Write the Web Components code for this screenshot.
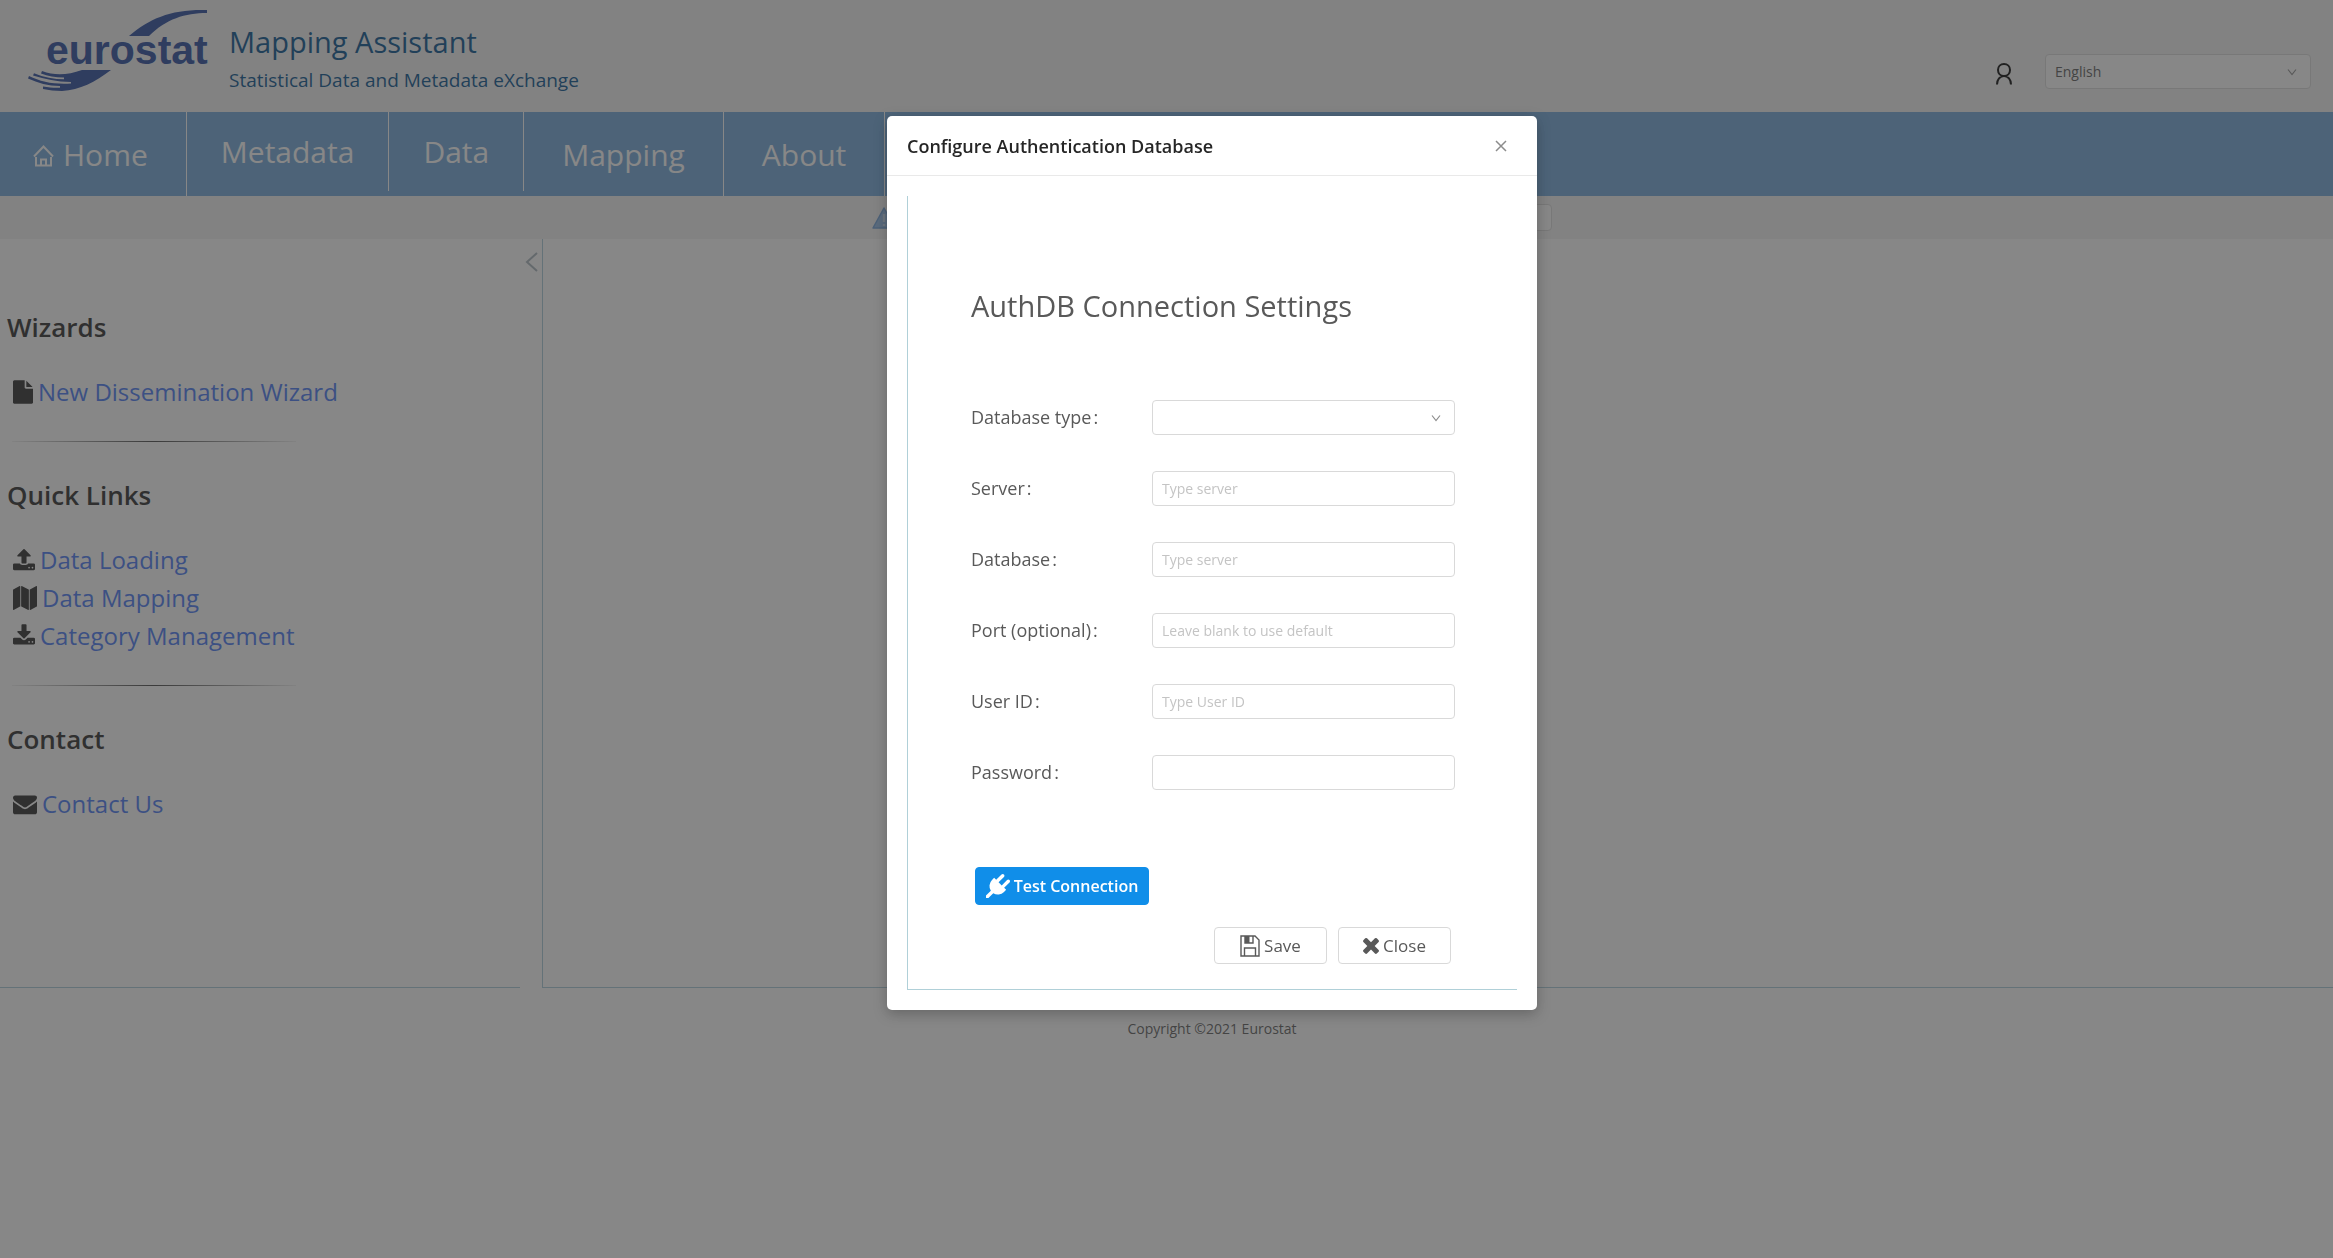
<!DOCTYPE html>
<html lang="en">
<head>
<meta charset="utf-8">
<title>Mapping Assistant</title>
<style>
  html, body { margin: 0; min-height: 100%; }
  body {
    background: #fff;
    color: #595959;
    font-family: "Open Sans", "Noto Sans", sans-serif;
    --bar: #f3f3f3;
    --line: #a9cbd9;
    --shift: 91px;
    overflow: hidden;
  }
</style>
</head>
<body>
<mapping-app></mapping-app>

<script>
const ICONS = {
  file: ['128 0 1536 1792', 20, 24, 'M1152 512V40q22 14 36 28l408 408q14 14 28 36h-472zm-128 32q0 40 28 68t68 28h544v1056q0 40-28 68t-68 28H224q-40 0-68-28t-28-68V96q0-40 28-68T224 0h800v544z'],
  upload: ['64 0 1664 1792', 22, 24, 'M1344 1472q0-26-19-45t-45-19-45 19-19 45 19 45 45 19 45-19 19-45zm256 0q0-26-19-45t-45-19-45 19-19 45 19 45 45 19 45-19 19-45zm128-224v320q0 40-28 68t-68 28H160q-40 0-68-28t-28-68v-320q0-40 28-68t68-28h427q21 56 70.5 92t110.5 36h256q61 0 110.5-36t70.5-92h427q40 0 68 28t28 68zm-325-648q-17 40-59 40h-256v448q0 26-19 45t-45 19H768q-26 0-45-19t-19-45V640H448q-42 0-59-40-17-39 14-69l448-448q18-19 45-19t45 19l448 448q31 30 14 69z'],
  download: ['64 0 1664 1792', 22, 24, 'M1344 1344q0-26-19-45t-45-19-45 19-19 45 19 45 45 19 45-19 19-45zm256 0q0-26-19-45t-45-19-45 19-19 45 19 45 45 19 45-19 19-45zm128-224v320q0 40-28 68t-68 28H160q-40 0-68-28t-28-68v-320q0-40 28-68t68-28h465l135 136q58 56 136 56t136-56l136-136h464q40 0 68 28t28 68zm-325-569q17 41-14 70l-448 448q-18 19-45 19t-45-19L403 621q-31-29-14-70 17-39 59-39h256V64q0-26 19-45t45-19h256q26 0 45 19t19 45v448h256q42 0 59 39z'],
  map: ['0 0 1792 1792', 24, 24, 'M512 0q13 0 22.5 9.5t9.5 22.5v1472q0 20-17 28l-480 256q-7 4-15 4-13 0-22.5-9.5t-9.5-22.5v-1472q0-20 17-28l480-256q7-4 15-4zm1248 0q13 0 22.5 9.5t9.5 22.5v1472q0 20-17 28l-480 256q-7 4-15 4-13 0-22.5-9.5t-9.5-22.5v-1472q0-20 17-28l480-256q7-4 15-4zm-1120 0q8 0 14 3l512 256q18 10 18 29v1472q0 13-9.5 22.5t-22.5 9.5q-8 0-14-3l-512-256q-18-10-18-29v-1472q0-13 9.5-22.5t22.5-9.5z'],
  envelope: ['0 0 1792 1792', 24, 24, 'M1792 710v794q0 66-47 113t-113 47H160q-66 0-113-47T0 1504V710q44 49 101 87 362 246 497 345 57 42 92.5 65.5t94.5 48 110 24.5h2q51 0 110-24.5t94.5-48 92.5-65.5q170-123 498-345 57-39 100-87zm0-294q0 79-49 151t-122 123q-376 261-468 325-10 7-42.5 31t-54 38.5-52 32.5-57.5 27-50 9h-2q-23 0-50-9t-57.5-27-52-32.5-54-38.5-42.5-31q-91-64-262-182.5T172 690q-62-42-117-115.5T0 438q0-78 41.5-130T160 256h1472q65 0 112.5 47t47.5 113z'],
  plug: ['0 0 1792 1792', 24, 24, 'M1755 453q37 38 37 90.5t-37 90.5l-401 400 150 150-160 160q-163 163-389.5 186.5t-411.5-100.5l-362 362h-181v-181l362-362q-124-185-100.5-411.5t186.5-389.5l160-160 150 150 400-401q38-37 91-37t90 37 37 90.5-37 90.5l-400 401 234 234 401-400q38-37 91-37t90 37z'],
  times: ['302 302 1188 1252', 16, 17, 'M1490 1322q0 40-28 68l-136 136q-28 28-68 28t-68-28l-294-294-294 294q-28 28-68 28t-68-28l-136-136q-28-28-28-68t28-68l294-294-294-294q-28-28-28-68t28-68l136-136q28-28 68-28t68 28l294 294 294-294q28-28 68-28t68 28l136 136q28 28 28 68t-28 68l-294 294 294 294q28 28 28 68z'],
};
const STROKED = {
  home: ['0 -4 21 26', 21, 26, 2, 'M1 11.5 10.5 1.5 20 11.5M3 12v8.5h15V12M8 20.500v-6h5v6'],
  user: ['0 0 16 22', 16, 22, 2, 'M1 21.500c0-5 3-8.500 7-8.500s7 3.500 7 8.500M8 13c-3.500 0-6-2.500-6-6s2.500-6 6-6 6 2.500 6 6-2.500 6-6 6z'],
  left: ['0 0 13 20', 13, 20, 2, 'M12 1 2 10l10 9'],
  down: ['0 0 10 8', 10, 8, 1.2, 'M1 1.500 5 6.500 9 1.500'],
  cross: ['0 0 12 12', 12, 12, 1.5, 'M1 1 11 11M11 1 1 11'],
  floppy: ['0 0 20 22', 20, 22, 1.4, 'M1 1h14l4 4v16H1zM4.500 21v-8h11v8M5 1v7h8V1'],
};

function define(name, html) {
  customElements.define(name, class extends HTMLElement {
    connectedCallback() {
      if (this.shadowRoot) return;
      const root = this.attachShadow({ mode: 'open' });
      root.innerHTML = typeof html === 'function' ? html(this) : html;
    }
  });
}

define('ui-icon', el => {
  const n = el.getAttribute('name');
  const css = '<style>:host{display:block;flex:none}svg{display:block}</style>';
  if (ICONS[n]) {
    const [box, w, h, d] = ICONS[n];
    return `${css}<svg aria-hidden="true" viewBox="${box}" width="${w}" height="${h}" fill="currentColor"><path d="${d}"/></svg>`;
  }
  const [box, w, h, s, d] = STROKED[n];
  const shutter = n === 'floppy' ? '<path fill="currentColor" stroke="none" d="M5 1h4.500v7H5z"/>' : '';
  return `${css}<svg aria-hidden="true" viewBox="${box}" width="${w}" height="${h}" fill="none" stroke="currentColor" stroke-width="${s}"><path d="${d}"/>${shutter}</svg>`;
});

define('eurostat-logo', `
<style>:host{display:block;flex:none}svg{display:block}text{font:bold 41px "Liberation Sans",sans-serif}</style>
<svg viewBox="28 8 180 84" width="180" height="84" fill="#23469c" role="img" aria-label="eurostat">
  <path d="M129 36C150 18 172 9 207 10v3C185 13 166 19 149 36z"/>
  <text x="46" y="64">eurostat</text>
  <path d="M111 70C95 82 80 90 62 91 55 91 49 90 43 89v-2.500c6 1 12 1.500 17 1.200V86c-12 0-22-3-32-7.500l1-2.500c12 6 25 8.500 42 7.500V82C57 82 45 79 33 75.500l1-2.300c10 4 20 6 30 6v-1.700C55 77.500 48 76 41 73.500l1-2.500C55 76 68 75 82 70z"/>
</svg>`);

define('ui-select', el => `
<style>
  :host{display:grid}
  select,ui-icon{grid-area:1/1}
  select{appearance:none;box-sizing:border-box;width:100%;height:35px;margin:0;padding:0 28px 0 9px;border:1px solid #d9d9d9;border-radius:4px;background:#fff;color:#595959;font:14px "Open Sans",sans-serif}
  ui-icon{justify-self:end;align-self:center;margin-right:14px;color:#8c8c8c;pointer-events:none}
</style>
<select aria-label="${el.getAttribute('label')}"><option>${el.getAttribute('value') || ''}</option></select>
<ui-icon name="down"></ui-icon>`);

define('app-header', `
<style>
  :host{display:flex;align-items:flex-start;height:112px;background:var(--bar)}
  eurostat-logo{margin:8px 21px 0 28px}
  .brand{display:flex;flex-direction:column;gap:4px;padding-top:23px;color:#004f8c}
  h1,p{margin:0;font-weight:400}
  h1{font-size:29px;line-height:38px}
  p{font-size:19px;line-height:30px}
  .tools{display:flex;align-items:flex-start;gap:33px;margin-left:auto;padding:54px 22px 0 0}
  button{margin:9px 0 0;padding:0;border:0;background:none;color:#000}
  ui-select{width:266px}
</style>
<eurostat-logo></eurostat-logo>
<div class="brand"><h1>Mapping Assistant</h1><p>Statistical Data and Metadata eXchange</p></div>
<div class="tools">
  <button aria-label="Account"><ui-icon name="user"></ui-icon></button>
  <ui-select label="Language" value="English"></ui-select>
</div>`);

define('nav-item', `
<style>
  :host{display:block;border-right:1px solid #fff}
  a{display:flex;align-items:center;gap:9px;height:84px;padding:0 38px;color:#fff;font-size:30px;text-decoration:none}
  :host([short]) a{height:79px;padding:0 34px}
  :host([icon]) a{padding-left:33px}
</style>
<a href="#"><slot name="icon"></slot><slot></slot></a>`);

define('app-nav', `
<style>
  :host{display:block;background:#6ea6da}
  nav{display:flex;align-items:flex-start;height:84px}
</style>
<nav>
  <nav-item icon><ui-icon slot="icon" name="home"></ui-icon>Home</nav-item>
  <nav-item short>Metadata</nav-item>
  <nav-item short>Data</nav-item>
  <nav-item>Mapping</nav-item>
  <nav-item>About</nav-item>
</nav>`);

define('store-bar', `
<style>
  :host{display:flex;justify-content:center;align-items:center;gap:8px;height:43px;padding-left:var(--shift);background:var(--bar)}
  svg{flex:none}
  input{box-sizing:border-box;width:648px;height:27px;padding:0;border:1px solid #d9d9d9;border-radius:4px;background:#fff}
</style>
<svg width="24" height="22" viewBox="0 0 24 22" aria-hidden="true"><path d="M12 1 23 21H1z" fill="#8fb9e6" stroke="#6ea0d8" stroke-width="1.500" stroke-linejoin="round"/><path d="M12 7v8M12 17v2" stroke="#c4d8ee" stroke-width="2.500"/></svg>
<input aria-label="Mapping store">`);

define('link-item', el => `
<style>
  :host{display:flex;align-items:center;gap:5px;height:38px;padding-left:13px;color:#262626}
  a{color:#4577f5;font-size:24px;line-height:38px;text-decoration:none}
</style>
<ui-icon name="${el.getAttribute('icon')}"></ui-icon><a href="#"><slot></slot></a>`);

define('side-section', `
<style>
  :host{display:block}
  h2{margin:0 0 25px;padding-left:7px;color:#262626;font-size:26px;font-weight:600;line-height:38px;padding-bottom:2px}
  hr{width:284px;height:1px;margin:30px 0 34px 12px;border:0;background:linear-gradient(90deg,rgba(0,0,0,.05),rgba(0,0,0,.75),rgba(0,0,0,.05))}
  :host([last]) hr{display:none}
</style>
<h2><slot name="title"></slot></h2><slot></slot><hr>`);

define('app-main', `
<style>
  :host{display:flex;gap:22px}
  aside{position:relative;box-sizing:border-box;width:520px;padding:69px 0 164px;border-bottom:1px solid var(--line)}
  .fold{position:absolute;top:13px;right:-18px;padding:0;border:0;background:none;color:#a8b4bc}
  main{flex:1;border-left:1px solid var(--line);border-bottom:1px solid var(--line)}
</style>
<aside>
  <button class="fold" aria-label="Collapse"><ui-icon name="left"></ui-icon></button>
  <side-section><span slot="title">Wizards</span>
    <link-item icon="file">New Dissemination Wizard</link-item>
  </side-section>
  <side-section><span slot="title">Quick Links</span>
    <link-item icon="upload">Data Loading</link-item>
    <link-item icon="map">Data Mapping</link-item>
    <link-item icon="download">Category Management</link-item>
  </side-section>
  <side-section last><span slot="title">Contact</span>
    <link-item icon="envelope">Contact Us</link-item>
  </side-section>
</aside>
<main></main>`);

define('app-footer', `
<style>
  :host{display:block;padding:26px 0 0 var(--shift);color:#595959;font-size:14px;line-height:30px;text-align:center}
</style>
<footer><slot></slot></footer>`);

define('form-field', el => {
  const label = el.getAttribute('label');
  const box = el.hasAttribute('select')
    ? '<div class="pick"><select id="control"><option></option></select><ui-icon name="down"></ui-icon></div>'
    : `<input id="control" type="${el.getAttribute('type') || 'text'}" placeholder="${el.getAttribute('hint') || ''}">`;
  return `
<style>
  :host{display:grid;grid-template-columns:181px 1fr;align-items:center}
  label{display:flex;gap:2px;font-size:18px;line-height:35px}
  input,select{appearance:none;box-sizing:border-box;width:100%;height:35px;margin:0;padding:0 9px;border:1px solid #d9d9d9;border-radius:4px;background:#fff;color:#595959;font:14px "Open Sans",sans-serif}
  input::placeholder{color:#c4c4c4}
  .pick{display:grid}
  .pick>*{grid-area:1/1}
  ui-icon{justify-self:end;align-self:center;margin-right:14px;color:#8c8c8c;pointer-events:none}
</style>
<label for="control"><span>${label}</span><span>:</span></label>${box}`;
});

define('ui-button', el => `
<style>
  :host{display:block}
  button{display:flex;align-items:center;justify-content:center;gap:4px;box-sizing:border-box;width:113px;height:37px;margin:0;padding:0;border:1px solid #d9d9d9;border-radius:4px;background:#fff;color:#595959;font:17px "Open Sans",sans-serif;font-weight:500}
  :host([primary]) button{width:174px;height:38px;border-color:#108ee9;background:#108ee9;color:#fff;font-size:16px;font-weight:600}
</style>
<button type="button"><ui-icon name="${el.getAttribute('icon')}"></ui-icon><slot></slot></button>`);

define('auth-dialog', `
<style>
  :host{position:fixed;inset:0;display:flex;justify-content:center;align-items:flex-start;padding:116px 0 0 var(--shift);background:rgba(55,55,55,.6)}
  section{display:flow-root;width:650px;border-radius:5px;background:#fff;box-shadow:0 4px 14px rgba(0,0,0,.25)}
  header{display:flex;align-items:center;justify-content:space-between;height:59px;padding:0 30px 0 20px;border-bottom:1px solid #e9e9e9}
  h2{margin:0;color:#262626;font-size:18px;font-weight:600;line-height:24px}
  header button{padding:0;border:0;background:none;color:#8c8c8c}
  form{display:flex;flex-direction:column;margin:20px;padding:90px 62px 25px 63px;border-left:1px solid #b0d0d8;border-bottom:1px solid #b0d0d8}
  h3{margin:0 0 74px;font-size:29px;font-weight:400;line-height:40px}
  .fields{display:flex;flex-direction:column;gap:36px}
  .test{display:flex;padding:77px 0 22px 4px}
  .actions{display:flex;justify-content:flex-end;gap:11px;padding-right:4px}
</style>
<section role="dialog" aria-label="Configure Authentication Database">
  <header><h2>Configure Authentication Database</h2><button aria-label="Dismiss"><ui-icon name="cross"></ui-icon></button></header>
  <form>
    <h3>AuthDB Connection Settings</h3>
    <div class="fields">
      <form-field label="Database type" select></form-field>
      <form-field label="Server" hint="Type server"></form-field>
      <form-field label="Database" hint="Type server"></form-field>
      <form-field label="Port (optional)" hint="Leave blank to use default"></form-field>
      <form-field label="User ID" hint="Type User ID"></form-field>
      <form-field label="Password" type="password"></form-field>
    </div>
    <div class="test"><ui-button primary icon="plug">Test Connection</ui-button></div>
    <div class="actions"><ui-button icon="floppy">Save</ui-button><ui-button icon="times">Close</ui-button></div>
  </form>
</section>`);

define('mapping-app', `
<style>:host{display:block}</style>
<app-header></app-header>
<app-nav></app-nav>
<store-bar></store-bar>
<app-main></app-main>
<app-footer>Copyright ©2021 Eurostat</app-footer>
<auth-dialog></auth-dialog>`);
</script>
</body>
</html>
